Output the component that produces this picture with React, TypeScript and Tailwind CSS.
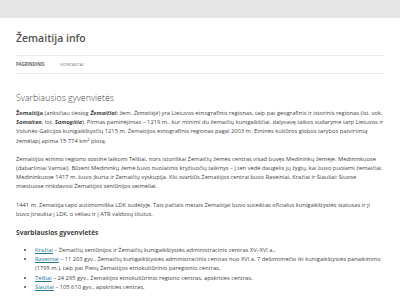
export default function App() {
  return (
    <div className="min-h-[300px] bg-white font-['Open_Sans',sans-serif] text-[#444]">
      <div className="h-[18px] bg-[#e6e6e6]" />

      <div className="px-4">
        <header className="pt-[13px]">
          <h1 className="text-[10.5px] font-semibold leading-[14px] text-[#515151]">Žemaitija info</h1>
          <nav className="mt-[10px] flex gap-[16px] border-y border-[#ededed] py-[6px] text-[4.3px] uppercase leading-[5px]">
            <span className="font-bold text-[#636363]">Pagrindinis</span>
            <span className="text-[#757575]">Kontaktai</span>
          </nav>
        </header>

        <main className="pt-[18px] text-[5.75px] leading-[9.2px]">
          <h2 className="mb-[5px] text-[8.9px] font-light leading-[12px] text-[#444]">Svarbiausios gyvenvietės</h2>

          <p className="mb-[9px]">
            <b>Žemaitija</b> (anksčiau tiesiog <b><i>Žemaičiai</i></b>; žem. <i>Žemaitėjė</i>) yra Lietuvos etnografinis regionas, taip pat geografinis ir istorinis regionas (ist. vok. <b><i>Samaiten</i></b>, lot. <b><i>Samogitia</i></b>). Pirmas paminėjimas – 1219 m., kur minimi du žemaičių kunigaikščiai, dalyvavę taikos sudaryme tarp Lietuvos ir Volunės-Galicijos kunigaikštysčių 1215 m. Žemaitijos etnografinis regionas pagal 2003 m. Etninės kultūros globos tarybos patvirtintą žemėlapį apima 15 774 km² plotą.
          </p>

          <p className="mb-[9px]">
            Žemaitijos etninio regiono sostine laikomi Telšiai, nors istoriškai Žemaičių žemės centras visad buvęs Medininkų žemėje. Medininkuose (dabartiniai Varniai). Būtent Medininkų žemė buvo nuolatinis kryžiuočių taikinys – į ten vedė daugelis jų žygių, kai buvo puolami žemaičiai. Medininkuose 1417 m. buvo įkurta ir Žemaičių vyskupija. Kiti svarbūs Žemaitijos centrai buvo Raseiniai, Kražiai ir Šiauliai: Šiuose miestuose rinkdavosi Žemaitijos seniūnijos seimeliai.
          </p>

          <p className="mb-[9px]">
            1441 m. Žemaitija tapo autonomiška LDK sudėtyje. Tais pačiais metais Žemaitijai buvo suteiktas oficialus kunigaikštystės statusas ir ji buvo įtraukta į LDK, o vėliau ir į ATR valdovų titulus.
          </p>

          <h3 className="mb-[8px] text-[6.6px] font-bold leading-[10px]">Svarbiausios gyvenvietės</h3>

          <ul className="ml-[19px] list-disc">
            <li>
              <a className="text-[#21759b] underline">Kražiai</a> – Žemaičių seniūnijos ir Žemaičių kunigaikštystės administracinis centras XV–XVI a.,
            </li>
            <li>
              <a className="text-[#21759b] underline">Raseiniai</a> – 11 203 gyv., Žemaičių kunigaikštystės administracinis centras nuo XVI a. 7 dešimtmečio iki kunigaikštystės panaikinimo (1795 m.), taip pat Pietų Žemaitijos etnokultūrinio paregionio centras,
            </li>
            <li>
              <a className="text-[#21759b] underline">Telšiai</a> – 24 295 gyv., Žemaitijos etnokultūrinio regiono centras, apskrities centras,
            </li>
            <li>
              <a className="text-[#21759b] underline">Šiauliai</a> – 105 610 gyv., apskrities centras,
            </li>
          </ul>
        </main>
      </div>
    </div>
  )
}
